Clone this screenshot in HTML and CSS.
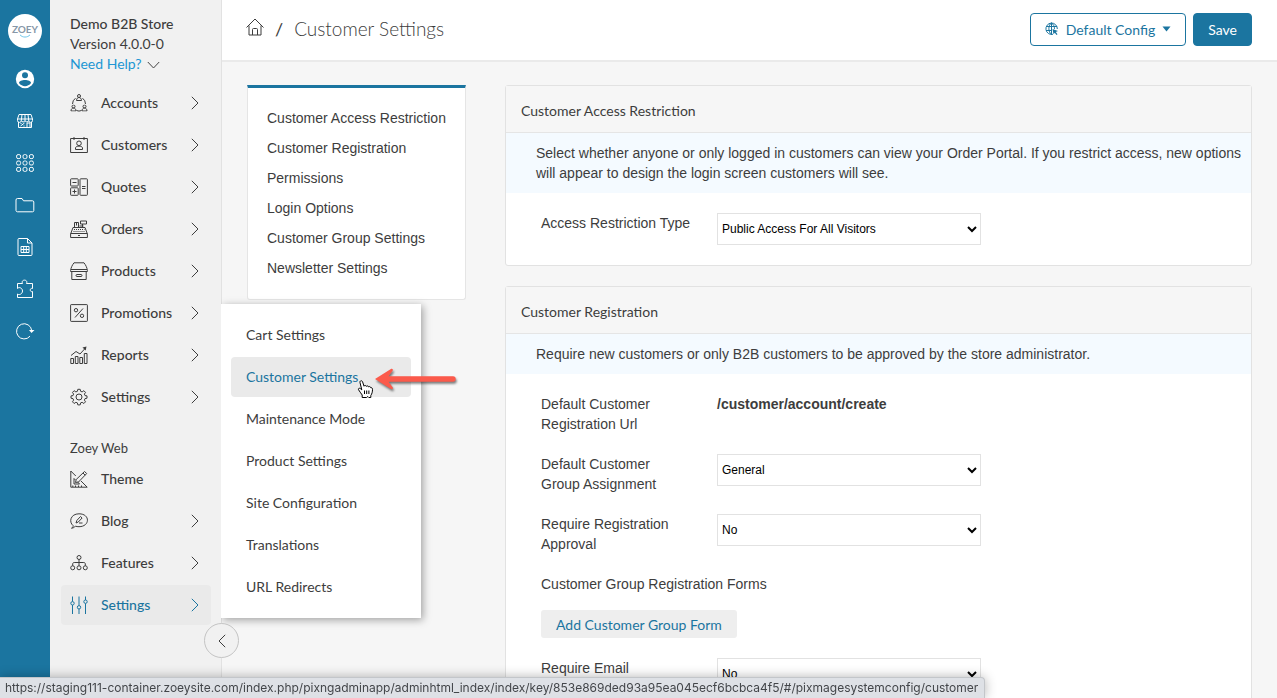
FILE: index.html
```html
<!DOCTYPE html>
<html lang="en">
<head>
    <meta charset="UTF-8">
    <meta name="viewport" content="width=device-width, initial-scale=1.0">
    <title>Customer Settings</title>
    <link rel="stylesheet" href="styles.css">
</head>
<body>
    <!-- shared shapes -->
    <svg class="defs" width="0" height="0" aria-hidden="true">
        <symbol id="chevron" viewBox="0 0 8 14"><path d="M.8.8 7 7 .8 13.2"/></symbol>
        <symbol id="person" viewBox="0 0 6 7"><circle cx="3" cy="2" r="1.5"/><path d="M.5 6.500c0-4 5-4 5 0z"/></symbol>
    </svg>

    <div class="app">
        <nav class="rail" aria-label="Apps">
            <a href="#" class="logo" aria-label="Zoey">
                <span>ZOEY</span>
                <svg width="12" height="4" viewBox="0 0 12 4"><path d="M1 .8c2.5 3 7.5 3 10 0"/></svg>
            </a>
            <a href="#" class="rail-link" aria-label="Profile">
                <svg width="20" height="20" viewBox="0 0 20 20"><circle cx="10" cy="10" r="9.2" fill="#fff" stroke="none"/><circle cx="10" cy="6.3" r="3" class="cut"/><path class="cut" d="M4 14c0-4 12-4 12 0-3 4.2-9 4.2-12 0z"/></svg>
            </a>
            <a href="#" class="rail-link" aria-label="Store">
                <svg width="18" height="18" viewBox="0 0 18 18"><path d="M3 2.5h12l1.500 4.500v1.500a1.900 1.900 0 0 1-3.800 0 1.900 1.900 0 0 1-3.700 0 1.900 1.900 0 0 1-3.700 0 1.900 1.900 0 0 1-3.800 0V7zM1.500 7h15M6 2.500 5.300 8.500M9 2.500v6M12 2.500l.7 6M2.500 10v5.500h13V10M11 15.500v-4.500h3v4.500M4.500 14l4-3M4.500 11.500h1M7.500 14h1"/></svg>
            </a>
            <a href="#" class="rail-link" aria-label="Catalog">
                <svg width="18" height="18" viewBox="0 0 18 18"><rect x=".6" y=".6" width="4" height="4" rx="1.5"/><rect x="7" y=".6" width="4" height="4" rx="1.5"/><rect x="13.4" y=".6" width="4" height="4" rx="1.5"/><rect x=".6" y="7" width="4" height="4" rx="1.5"/><rect x="7" y="7" width="4" height="4" rx="1.5"/><rect x="13.4" y="7" width="4" height="4" rx="1.5"/><rect x=".6" y="13.4" width="4" height="4" rx="1.5"/><rect x="7" y="13.4" width="4" height="4" rx="1.5"/><rect x="13.4" y="13.4" width="4" height="4" rx="1.5"/></svg>
            </a>
            <a href="#" class="rail-link" aria-label="Files">
                <svg width="20" height="16" viewBox="0 0 20 16"><path d="M1 3a1.500 1.500 0 0 1 1.500-1.500H7l1.500 2.300h9A1.300 1.300 0 0 1 18.800 5v8.500a1.300 1.300 0 0 1-1.300 1.300H2.500A1.500 1.500 0 0 1 1 13.500z"/></svg>
            </a>
            <a href="#" class="rail-link" aria-label="Data">
                <svg width="18" height="20" viewBox="0 0 18 20"><path d="M3 1.500h8.500l4.500 4.500v11.500a1 1 0 0 1-1 1H3a1 1 0 0 1-1-1v-15a1 1 0 0 1 1-1zM11.500 1.500V6H16M5 9.500h8v6H5zM5 12.500h8M7.700 9.500v6M10.300 9.500v6"/></svg>
            </a>
            <a href="#" class="rail-link" aria-label="Integrations">
                <svg width="20" height="20" viewBox="0 0 20 20"><path d="M2.500 4.500H7.500C5.500 0 13.500 0 11.500 4.500H17.500v5c-3-1-3 4 0 3V18.500H2.500v-3.500c1.500 1.500 5 0 5-3S4 7.500 2.500 9.500z"/></svg>
            </a>
            <a href="#" class="rail-link" aria-label="Refresh">
                <svg width="20" height="18" viewBox="0 0 20 18"><path d="M15 14.200A7.600 7.600 0 1 1 16.700 8.500"/><path class="solid" d="M14 8h5.500l-3 3z"/></svg>
            </a>
        </nav>

        <aside class="sidebar">
            <div class="store">
                <strong>Demo B2B Store</strong>
                <span>Version 4.0.0-0</span>
                <a href="#">Need Help? <svg width="13" height="8" viewBox="0 0 13 8"><path d="M.8 1l5.700 6 5.700-6"/></svg></a>
            </div>

            <ul class="menu">
                <li><a href="#">
                    <svg class="icon" viewBox="0 0 18 18"><use href="#person" x="5.500" y="0" width="7" height="7"/><use href="#person" x="0" y="10.500" width="7" height="7"/><use href="#person" x="11" y="10.500" width="7" height="7"/><path d="M5.500 4.200A7 7 0 0 0 2.500 10M12.500 4.200A7 7 0 0 1 15.500 10M6.500 16.500q2.500 1.200 5 0"/></svg>
                    <span>Accounts</span><svg class="chev"><use href="#chevron"/></svg></a></li>
                <li><a href="#">
                    <svg class="icon" viewBox="0 0 18 18"><path d="M.6 2.500h16.800v14H.6zM4 1v3M14 1v3M5.500 13.500v-1.500c0-1 1-1.500 2.300-1.800h2.400c1.300.3 2.300.8 2.300 1.800v1.500z"/><circle cx="9" cy="7.300" r="2.300"/></svg>
                    <span>Customers</span><svg class="chev"><use href="#chevron"/></svg></a></li>
                <li><a href="#">
                    <svg class="icon" viewBox="0 0 18 18"><rect x=".6" y=".8" width="7.600" height="7.200" rx=".7"/><rect x=".6" y="9.800" width="7.600" height="7.500" rx=".7"/><rect x="10" y=".8" width="7.400" height="16.500" rx=".7"/><path d="M2.500 4.500h4M2.500 13.500h4M4.500 11.500v4M12 8.500h3.500M12 10.500h3.500"/></svg>
                    <span>Quotes</span><svg class="chev"><use href="#chevron"/></svg></a></li>
                <li><a href="#">
                    <svg class="icon" viewBox="0 0 18 18"><path d="M.6 13.500h16.800v4H.6zM.8 13.500 3 7.500h12l2.200 6M4.500 7.500v-5h4v5M6.500 2.500v3M10.500 1h6v3h-6zM12.500 4v3.500M9.500 6h4M8 15.500h2"/><path stroke-dasharray="1 1" d="M4 9.500h10.500M3.500 11.500h11.500"/></svg>
                    <span>Orders</span><svg class="chev"><use href="#chevron"/></svg></a></li>
                <li><a href="#">
                    <svg class="icon" viewBox="0 0 18 18"><path d="M.6 8.500C1 5.500 2.300 3 4 .8h10c1.700 2.200 3 4.700 3.400 7.700v1H.6zM1 7.500h16M1.800 9.500v8h14.400v-8"/><rect x="6" y="12.500" width="6" height="2" rx="1"/></svg>
                    <span>Products</span><svg class="chev"><use href="#chevron"/></svg></a></li>
                <li><a href="#">
                    <svg class="icon" viewBox="0 0 18 18"><rect x=".6" y=".6" width="16.800" height="16.800" rx=".6"/><path d="M13 4.500l-8 9"/><circle cx="6" cy="6.200" r="1.700"/><circle cx="12" cy="11.800" r="1.700"/></svg>
                    <span>Promotions</span><svg class="chev"><use href="#chevron"/></svg></a></li>
                <li><a href="#">
                    <svg class="icon" viewBox="0 0 18 18"><path d="M.8 12.500h2.700v5H.8zM5.300 10.500H8v7H5.300zM9.800 11.500h2.700v6H9.800zM14.300 7.500H17v10h-2.700zM1 9.500l5-4 4 2.500 5.500-6"/><path class="solid" d="M12.500 1.500l4-1-.8 4z"/></svg>
                    <span>Reports</span><svg class="chev"><use href="#chevron"/></svg></a></li>
                <li><a href="#">
                    <svg class="icon" viewBox="0 0 18 18"><circle cx="9" cy="9" r="3"/><path d="M7.800 1.300h2.400l.4 2 1.500.6 1.800-1.200 1.600 1.700-1.100 1.700.6 1.500 2 .3v2.300l-2 .4-.6 1.500 1.100 1.700-1.600 1.700-1.800-1.200-1.500.6-.4 2H7.800l-.4-2-1.500-.6-1.800 1.200-1.600-1.700 1.100-1.700-.6-1.500-2-.4V7.900l2-.3.600-1.500-1.100-1.700 1.600-1.700 1.800 1.200 1.500-.6z"/></svg>
                    <span>Settings</span><svg class="chev"><use href="#chevron"/></svg></a></li>
            </ul>

            <h2 class="menu-title">Zoey Web</h2>
            <ul class="menu">
                <li><a href="#">
                    <svg class="icon" viewBox="0 0 18 18"><path d="M.8 1v16.200h16.400L11 11M.8 1l5 5M4 8.500v5.500h5.500L7.500 11.800M4 8.500l1.500 1.500M5.500 12.500l.7-3L14.500 1.500l2.200 2L8.500 12zM13 3l2.200 2.200M2.800 15.500v1.500M5.500 15.500v1.500M8.500 15.500v1.500M11.500 15.500v1.500"/></svg>
                    <span>Theme</span></a></li>
                <li><a href="#">
                    <svg class="icon" viewBox="0 0 18 18"><path d="M1.500 16.200c1.500-.6 1.700-1.500 1.700-2.500C-1.500 10 .5 1.800 9 1.800c11.500 0 11 12.900 0 12.900-1.500 0-2.500-.1-3.500-.6-1 1.200-2.300 2-4 2.100z"/><path d="M6 11l.8-2.500L10.500 4.500l1.600 1.500-3.800 4zM9 11h3.500"/></svg>
                    <span>Blog</span><svg class="chev"><use href="#chevron"/></svg></a></li>
                <li><a href="#">
                    <svg class="icon" viewBox="0 0 18 18"><circle cx="9" cy="3.500" r="2"/><circle cx="2.700" cy="13.800" r="2"/><circle cx="9" cy="13.800" r="2"/><circle cx="15.300" cy="13.800" r="2"/><path d="M9 5.500v6.300M2.700 11.800V10c0-.8.500-1.500 1.500-1.500h9.600c1 0 1.500.7 1.500 1.500v1.800"/></svg>
                    <span>Features</span><svg class="chev"><use href="#chevron"/></svg></a></li>
                <li><a href="#" class="active">
                    <svg class="icon" viewBox="0 0 18 18"><path d="M2.500.5v5M2.500 9v9M9 .5v9M9 13v5M15.500.5v3.500M15.500 7.500V18"/><circle cx="2.500" cy="7.300" r="1.700"/><circle cx="9" cy="11.300" r="1.700"/><circle cx="15.500" cy="5.700" r="1.700"/></svg>
                    <span>Settings</span><svg class="chev"><use href="#chevron"/></svg></a></li>
            </ul>

            <ul class="flyout">
                <li><a href="#">Cart Settings</a></li>
                <li><a href="#" class="active">Customer Settings</a></li>
                <li><a href="#">Maintenance Mode</a></li>
                <li><a href="#">Product Settings</a></li>
                <li><a href="#">Site Configuration</a></li>
                <li><a href="#">Translations</a></li>
                <li><a href="#">URL Redirects</a></li>
            </ul>
            <button type="button" class="collapse" aria-label="Collapse menu"><svg class="chev"><use href="#chevron"/></svg></button>
        </aside>

        <main class="page">
            <header class="topbar">
                <a href="#" class="home" aria-label="Home">
                    <svg width="18" height="18" viewBox="0 0 18 18"><path d="M.5 9.500 9 1l8.500 8.500M3 7.500v9.500h12V7.500M6.500 17v-5.500a1 1 0 0 1 1-1h3a1 1 0 0 1 1 1V17"/></svg>
                </a>
                <span class="slash">/</span>
                <h1>Customer Settings</h1>
                <button type="button" class="btn btn-outline">
                    <svg width="14" height="14" viewBox="0 0 14 14"><path d="M8 12.300A5.700 5.700 0 1 1 12.300 7M6.500.9v11.700M1 4.500h11M1 8.500h6M6.500.9C3 3 3 10 6.500 12.500M6.500.9c2 1.400 3 3.600 3 6"/><path class="solid" d="M7.500 7l5.500 2-2.200 1 1.700 2.300-1 .7-1.700-2.300-1.300 1.600z"/></svg>
                    Default Config
                    <svg width="9" height="6" viewBox="0 0 9 6"><path class="solid" d="M.5.500h8L4.500 5.500z"/></svg>
                </button>
                <button type="button" class="btn btn-primary">Save</button>
            </header>

            <div class="content">
                <nav class="sections">
                    <a href="#access">Customer Access Restriction</a>
                    <a href="#registration">Customer Registration</a>
                    <a href="#permissions">Permissions</a>
                    <a href="#login">Login Options</a>
                    <a href="#groups">Customer Group Settings</a>
                    <a href="#newsletter">Newsletter Settings</a>
                </nav>

                <form class="panels">
                    <section class="panel" id="access">
                        <h2>Customer Access Restriction</h2>
                        <p class="info">Select whether anyone or only logged in customers can view your Order Portal. If you restrict access, new options will appear to design the login screen customers will see.</p>
                        <div class="fields">
                            <div class="field">
                                <label for="accessType">Access Restriction Type</label>
                                <select id="accessType"><option>Public Access For All Visitors</option><option>Restricted Access</option></select>
                            </div>
                        </div>
                    </section>

                    <section class="panel" id="registration">
                        <h2>Customer Registration</h2>
                        <p class="info">Require new customers or only B2B customers to be approved by the store administrator.</p>
                        <div class="fields">
                            <div class="field">
                                <span class="name">Default Customer Registration Url</span>
                                <strong>/customer/account/create</strong>
                            </div>
                            <div class="field">
                                <label for="groupAssign">Default Customer Group Assignment</label>
                                <select id="groupAssign"><option>General</option><option>Wholesale</option></select>
                            </div>
                            <div class="field">
                                <label for="approval">Require Registration Approval</label>
                                <select id="approval"><option>No</option><option>Yes</option></select>
                            </div>
                            <div class="forms">
                                <span>Customer Group Registration Forms</span>
                                <button type="button" class="btn-soft">Add Customer Group Form</button>
                            </div>
                            <div class="field">
                                <label for="emailConfirm">Require Email Confirmation</label>
                                <select id="emailConfirm"><option>No</option><option>Yes</option></select>
                            </div>
                        </div>
                    </section>
                </form>
            </div>
        </main>
    </div>

    <!-- callout arrow and pointer over the open menu -->
    <svg class="arrow" width="86" height="30" viewBox="0 0 86 30" aria-hidden="true"><path d="M2 14 17.500 4.200c2-1 3 .3 2 1.800L15.500 11.300H80a2.700 2.700 0 0 1 0 5.400H15.500l4 5.300c1 1.500 0 2.800-2 1.800z"/></svg>
    <svg class="pointer" width="18" height="20" viewBox="0 0 18 20" aria-hidden="true"><path d="M5.200 18.500V16C3.800 14 2.500 12.300 1.500 10.700c-.6-1.300 1-2 2-1l1.300 1.200L3 3.600C2.600 1.600 5 1 5.600 2.900l1.400 4.300c.3-1 2-1 2.300.2.500-.8 2-.7 2.300.5.700-.7 2-.3 2.300.9.900-.3 1.600.3 1.600 1.500 0 2.700-.5 4.400-1.700 6.200v2h-2l-1-1-1.300 1z"/><path d="M7.500 11.500v3.500M9.700 11.500v3.500M11.900 11.500v3.500"/></svg>

    <div class="status">https://staging111-container.zoeysite.com/index.php/pixngadminapp/adminhtml_index/index/key/853e869ded93a95ea045ecf6bcbca4f5/#/pixmagesystemconfig/customer</div>
</body>
</html>
```
FILE: styles.css
```css
* {
    box-sizing: border-box;
}
body {
    margin: 0;
    font-family: Lato, "Liberation Sans", sans-serif;
    font-size: 14px;
    line-height: 20px;
    color: #3d3d3d;
    background: #f6f6f6;
}
a {
    color: inherit;
    text-decoration: none;
}
ul {
    list-style: none;
    margin: 0;
    padding: 0;
}
h1, h2, p {
    margin: 0;
    font-weight: normal;
}
button {
    font-family: Lato, "Liberation Sans", sans-serif;
    font-size: 14px;
    cursor: pointer;
}
svg {
    fill: none;
    stroke: currentColor;
}
.defs {
    position: absolute;
}
.solid {
    fill: currentColor;
    stroke: none;
}
.app {
    display: flex;
    height: 100vh;
    overflow: hidden;
}

/* left icon rail */
.rail {
    flex: 0 0 50px;
    display: flex;
    flex-direction: column;
    align-items: center;
    padding-top: 14px;
    background: #1b75a0;
    color: #fff;
}
.logo {
    display: flex;
    flex-direction: column;
    align-items: center;
    justify-content: center;
    width: 34px;
    height: 34px;
    margin-bottom: 10px;
    border-radius: 50%;
    background: #fff;
    color: #8797a8;
    font-size: 10px;
    font-weight: bold;
    line-height: 10px;
}
.logo svg {
    stroke: #6cc5ea;
}
.rail-link {
    display: flex;
    align-items: center;
    justify-content: center;
    width: 50px;
    height: 42px;
}
.cut {
    fill: #1b75a0;
    stroke: none;
}

/* sidebar */
.sidebar {
    position: relative;
    z-index: 2;
    flex: 0 0 172px;
    padding: 14px 10px 0 11px;
    background: #f1f1f1;
    border-right: 1px solid #e2e2e2;
}
.store {
    display: flex;
    flex-direction: column;
    padding: 0 9px;
    margin-bottom: 9px;
}
.store strong {
    font-weight: 500;
}
.store a {
    color: #2196d3;
}
.store svg {
    color: #444;
    margin-left: 2px;
}
.menu li {
    margin-bottom: 2px;
}
.menu a {
    display: flex;
    align-items: center;
    height: 40px;
    padding: 0 12px 0 9px;
    border-radius: 4px;
    font-weight: 500;
}
.menu a.active {
    background: #eaeaea;
    color: #1b75a0;
}
.menu span {
    flex: 1;
}
.icon {
    width: 18px;
    height: 18px;
    margin-right: 13px;
}
.chev {
    width: 8px;
    height: 14px;
}
.menu-title {
    padding: 19px 9px 1px;
    font-size: 13px;
}
.flyout {
    position: absolute;
    top: 304px;
    left: 100%;
    width: 200px;
    padding: 11px 10px 9px;
    background: #fff;
    box-shadow: 2px 2px 8px rgba(0,0,0,0.35);
    clip-path: inset(-12px -12px -12px 0);
}
.flyout a {
    display: block;
    margin-bottom: 2px;
    padding: 10px 15px;
    border-radius: 4px;
}
.flyout a.active {
    background: #eaeaea;
    color: #1b75a0;
}
.collapse {
    position: absolute;
    top: 623px;
    right: -18px;
    display: flex;
    align-items: center;
    justify-content: center;
    width: 35px;
    height: 35px;
    padding: 0;
    border: 1px solid #c4c4c4;
    border-radius: 50%;
    background: #f1f1f1;
    color: #3d3d3d;
}
.collapse .chev {
    transform: scaleX(-1);
}

/* top bar */
.page {
    flex: 1;
    min-width: 0;
}
.topbar {
    display: flex;
    align-items: center;
    height: 62px;
    padding: 0 25px 2px 24px;
    background: #fff;
    border-bottom: 2px solid #eaeaea;
}
.home {
    display: flex;
    margin-bottom: 4px;
}
.slash {
    margin: 0 11px;
    font-size: 18px;
}
.topbar h1 {
    flex: 1;
    font-size: 19px;
    font-weight: 300;
    line-height: 24px;
}
.btn {
    display: flex;
    align-items: center;
    height: 33px;
    padding: 0 14px;
    border: 1px solid #1b75a0;
    border-radius: 4px;
}
.btn-outline {
    gap: 7px;
    margin-right: 7px;
    background: #fff;
    color: #1b75a0;
}
.btn-primary {
    background: #1b75a0;
    color: #fff;
}

/* settings page */
.content {
    display: flex;
    align-items: flex-start;
    gap: 39px;
    padding: 23px 25px;
    font-family: "Liberation Sans", Arial, sans-serif;
}
.sections {
    flex: 0 0 219px;
    display: flex;
    flex-direction: column;
    padding: 15px 19px 16px;
    background: #fff;
    border: 1px solid #e5e5e5;
    border-top: 3px solid #1b75a0;
    border-radius: 0 0 3px 3px;
}
.sections a {
    padding: 5px 0;
    white-space: nowrap;
}
.panels {
    flex: 1;
    min-width: 0;
}
.panel {
    margin-bottom: 20px;
    background: #fff;
    border: 1px solid #e2e2e2;
    border-radius: 3px;
}
.panel h2 {
    padding: 15px 15px 11px;
    background: #f6f6f6;
    border-bottom: 1px solid #e5e5e5;
    font-family: Lato, sans-serif;
    font-size: 14px;
}
.info {
    padding: 10px 5px 10px 30px;
    background: #f4faff;
}
.fields {
    display: flex;
    flex-direction: column;
    gap: 20px;
    padding: 20px 35px;
}
.field {
    display: flex;
    align-items: flex-start;
}
.field label, .field .name {
    width: 150px;
    margin-right: 26px;
}
select {
    width: 264px;
    height: 32px;
    padding: 0;
    border: 1px solid #e2e2e2;
    background: #fff;
    color: #000;
    font-family: "Liberation Sans", Arial, sans-serif;
    font-size: 12px;
}
.forms {
    display: flex;
    flex-direction: column;
    align-items: flex-start;
    gap: 16px;
}
.btn-soft {
    height: 28px;
    padding: 0 15px;
    border: none;
    border-radius: 3px;
    background: #eee;
    color: #1b75a0;
}

/* overlays */
.arrow {
    position: absolute;
    z-index: 3;
    top: 365px;
    left: 373px;
    fill: #fb5a4b;
    stroke: none;
    filter: drop-shadow(1px 2px 1px rgba(0,0,0,0.5));
}
.pointer {
    position: absolute;
    z-index: 3;
    top: 379px;
    left: 357px;
    fill: #fff;
    stroke: #000;
}
.status {
    position: fixed;
    z-index: 4;
    left: 0;
    bottom: 0;
    height: 21px;
    padding: 0 6px 0 5px;
    border: 1px solid #c3c6ca;
    border-width: 1px 1px 0 0;
    border-radius: 0 4px 0 0;
    background: #dee1e6;
    color: #43464a;
    box-shadow: 0 0 12px rgba(0,0,0,0.3);
    font-family: Inter, sans-serif;
    font-size: 12px;
    line-height: 19px;
    white-space: nowrap;
}
```
